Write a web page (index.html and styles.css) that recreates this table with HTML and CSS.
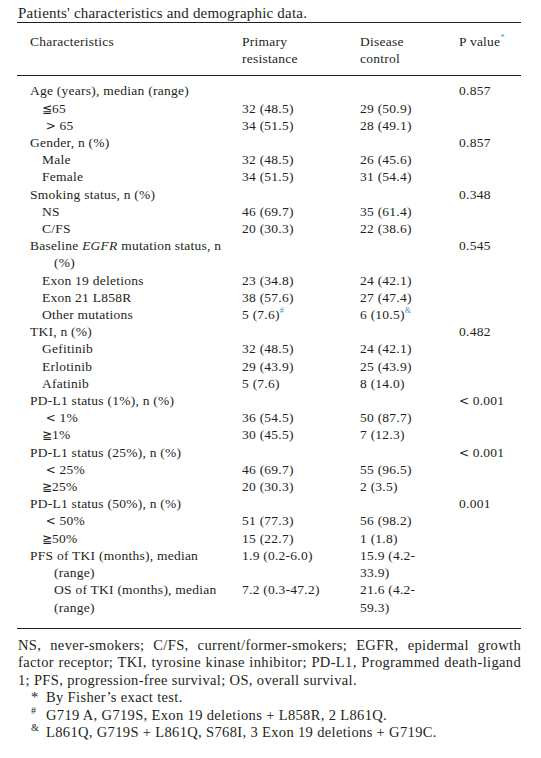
FILE: index.html
```
<!DOCTYPE html>
<html lang="en">
<head>
    <meta charset="UTF-8">
    <meta name="viewport" content="width=device-width, initial-scale=1.0">
    <title>Patients' characteristics</title>
    <link rel="stylesheet" href="styles.css">
</head>
<body>
    <div class="page">
        <div class="caption">Patients' characteristics and demographic data.</div>
        <table class="data">
            <colgroup>
                <col class="c1"><col class="c2"><col class="c3"><col class="c4">
            </colgroup>
            <thead>
                <tr>
                    <th>Characteristics</th>
                    <th>Primary<br>resistance</th>
                    <th>Disease<br>control</th>
                    <th>P value<sup class="ref">*</sup></th>
                </tr>
            </thead>
            <tbody>
                <tr class="first"><td class="head">Age (years), median (range)</td><td></td><td></td><td>0.857</td></tr>
                <tr><td class="sub"><span class="sym">≦</span>65</td><td>32 (48.5)</td><td>29 (50.9)</td><td></td></tr>
                <tr><td class="sub"><span class="sym"> &gt;</span> 65</td><td>34 (51.5)</td><td>28 (49.1)</td><td></td></tr>
                <tr><td class="head">Gender, n (%)</td><td></td><td></td><td>0.857</td></tr>
                <tr><td class="sub">Male</td><td>32 (48.5)</td><td>26 (45.6)</td><td></td></tr>
                <tr><td class="sub">Female</td><td>34 (51.5)</td><td>31 (54.4)</td><td></td></tr>
                <tr><td class="head">Smoking status, n (%)</td><td></td><td></td><td>0.348</td></tr>
                <tr><td class="sub">NS</td><td>46 (69.7)</td><td>35 (61.4)</td><td></td></tr>
                <tr><td class="sub">C/FS</td><td>20 (30.3)</td><td>22 (38.6)</td><td></td></tr>
                <tr><td class="head">Baseline <i>EGFR</i> mutation status, n<br>(%)</td><td></td><td></td><td>0.545</td></tr>
                <tr><td class="sub">Exon 19 deletions</td><td>23 (34.8)</td><td>24 (42.1)</td><td></td></tr>
                <tr><td class="sub">Exon 21 L858R</td><td>38 (57.6)</td><td>27 (47.4)</td><td></td></tr>
                <tr><td class="sub">Other mutations</td><td>5 (7.6)<sup class="ref">#</sup></td><td>6 (10.5)<sup class="ref">&amp;</sup></td><td></td></tr>
                <tr><td class="head">TKI, n (%)</td><td></td><td></td><td>0.482</td></tr>
                <tr><td class="sub">Gefitinib</td><td>32 (48.5)</td><td>24 (42.1)</td><td></td></tr>
                <tr><td class="sub">Erlotinib</td><td>29 (43.9)</td><td>25 (43.9)</td><td></td></tr>
                <tr><td class="sub">Afatinib</td><td>5 (7.6)</td><td>8 (14.0)</td><td></td></tr>
                <tr><td class="head">PD-L1 status (1%), n (%)</td><td></td><td></td><td><span class="sym">&lt;</span> 0.001</td></tr>
                <tr><td class="sub"><span class="sym"> &lt;</span> 1%</td><td>36 (54.5)</td><td>50 (87.7)</td><td></td></tr>
                <tr><td class="sub"><span class="sym">≧</span>1%</td><td>30 (45.5)</td><td>7 (12.3)</td><td></td></tr>
                <tr><td class="head">PD-L1 status (25%), n (%)</td><td></td><td></td><td><span class="sym">&lt;</span> 0.001</td></tr>
                <tr><td class="sub"><span class="sym"> &lt;</span> 25%</td><td>46 (69.7)</td><td>55 (96.5)</td><td></td></tr>
                <tr><td class="sub"><span class="sym">≧</span>25%</td><td>20 (30.3)</td><td>2 (3.5)</td><td></td></tr>
                <tr><td class="head">PD-L1 status (50%), n (%)</td><td></td><td></td><td>0.001</td></tr>
                <tr><td class="sub"><span class="sym"> &lt;</span> 50%</td><td>51 (77.3)</td><td>56 (98.2)</td><td></td></tr>
                <tr><td class="sub"><span class="sym">≧</span>50%</td><td>15 (22.7)</td><td>1 (1.8)</td><td></td></tr>
                <tr><td class="head">PFS of TKI (months), median<br>(range)</td><td>1.9 (0.2-6.0)</td><td>15.9 (4.2-<br>33.9)</td><td></td></tr>
                <tr class="last"><td class="deep">OS of TKI (months), median<br>(range)</td><td>7.2 (0.3-47.2)</td><td>21.6 (4.2-<br>59.3)</td><td></td></tr>
            </tbody>
        </table>
        <div class="notes">
            <p class="legend">NS, never-smokers; C/FS, current/former-smokers; EGFR, epidermal growth factor receptor; TKI, tyrosine kinase inhibitor; PD-L1, Programmed death-ligand 1; PFS, progression-free survival; OS, overall survival.</p>
            <p class="fn"><span class="mark">*</span>By Fisher’s exact test.</p>
            <p class="fn"><span class="mark"><sup>#</sup></span>G719 A, G719S, Exon 19 deletions + L858R, 2 L861Q.</p>
            <p class="fn"><span class="mark"><sup>&amp;</sup></span>L861Q, G719S + L861Q, S768I, 3 Exon 19 deletions + G719C.</p>
        </div>
    </div>
</body>
</html>
```
FILE: styles.css
```
body {
    margin: 0;
    background: #ffffff;
    color: #231f20;
    font-family: "Liberation Serif", "Times New Roman", serif;
}
.page {
    width: 504px;
    padding: 4px 0 0 17px;
}
.caption {
    font-size: 15px;
    letter-spacing: 0.2px;
    line-height: 18px;
    padding-left: 1px;
}
.data {
    width: 504px;
    border-collapse: collapse;
    table-layout: fixed;
    font-size: 13.5px;
    letter-spacing: 0.25px;
    border-top: 1.5px solid #231f20;
    border-bottom: 1.5px solid #231f20;
    margin-top: 0;
}
.c1 { width: 212px; }
.c2 { width: 118px; }
.c3 { width: 99px; }
.c4 { width: 75px; }
.data th,
.data td {
    text-align: left;
    vertical-align: top;
    font-weight: normal;
    line-height: 17.2px;
    padding: 0 0 0 13px;
    white-space: nowrap;
}
.data thead th {
    padding-top: 10px;
    padding-bottom: 8px;
    border-bottom: 1.5px solid #231f20;
}
.data tr.first td {
    padding-top: 6px;
}
.data tr.last td {
    padding-bottom: 12px;
}
.data td.head {
    padding-left: 37px;
    text-indent: -24px;
}
.data td.sub {
    padding-left: 25px;
}
.data td.deep {
    padding-left: 37px;
}
.sym {
    font-family: "DejaVu Sans", sans-serif;
    font-size: 12px;
    line-height: 1;
    letter-spacing: 0;
    white-space: pre;
}
.ref {
    color: #2f9ad6;
    font-size: 8px;
    line-height: 0;
    vertical-align: 6px;
}
.notes {
    font-size: 14.5px;
    letter-spacing: 0.35px;
    line-height: 17.5px;
    padding: 8px 0 0 1px;
}
.notes p {
    margin: 0;
}
.legend {
    text-align: justify;
}
.fn {
    padding-left: 13px;
}
.mark {
    display: inline-block;
    width: 15px;
}
.mark sup {
    font-size: 10px;
    line-height: 0;
}
```
